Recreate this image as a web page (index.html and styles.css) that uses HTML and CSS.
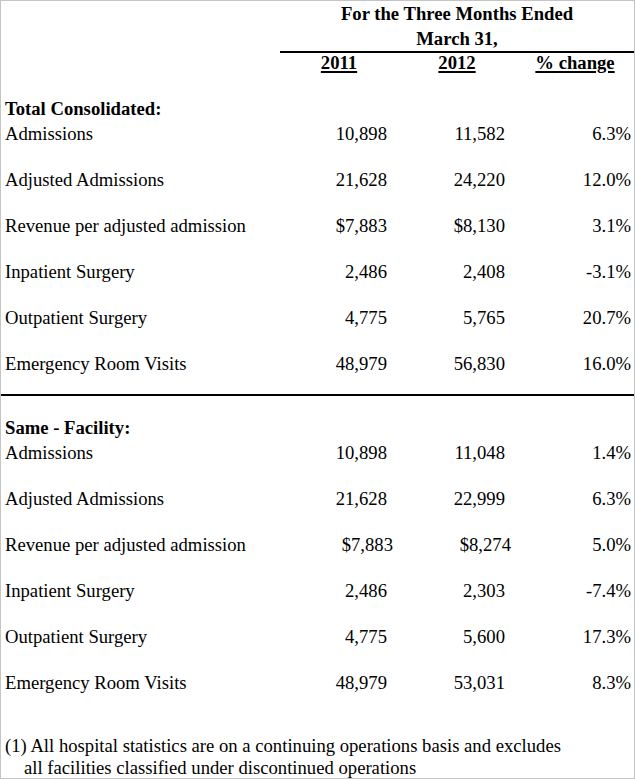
FILE: index.html
```html
<!DOCTYPE html>
<html>
<head>
<meta charset="utf-8">
<link rel="stylesheet" href="styles.css">
</head>
<body>
<div class="page">
<table class="stats">
  <colgroup>
    <col class="c-label"><col class="c-num"><col class="c-num"><col class="c-pct">
  </colgroup>
  <tr class="h1"><td></td><th colspan="3">For the Three Months Ended</th></tr>
  <tr class="h2"><td></td><th colspan="3" class="ruled">March 31,</th></tr>
  <tr class="h3"><td></td><th><u>2011</u></th><th><u>2012</u></th><th><u>% change</u></th></tr>
  <tr class="gap"><td colspan="4"></td></tr>
  <tr class="sect"><td colspan="4">Total Consolidated:</td></tr>
  <tr class="row"><td>Admissions</td><td class="n">10,898</td><td class="n">11,582</td><td class="p">6.3%</td></tr>
  <tr class="row"><td>Adjusted Admissions</td><td class="n">21,628</td><td class="n">24,220</td><td class="p">12.0%</td></tr>
  <tr class="row"><td>Revenue per adjusted admission</td><td class="n">$7,883</td><td class="n">$8,130</td><td class="p">3.1%</td></tr>
  <tr class="row"><td>Inpatient Surgery</td><td class="n">2,486</td><td class="n">2,408</td><td class="p">-3.1%</td></tr>
  <tr class="row"><td>Outpatient Surgery</td><td class="n">4,775</td><td class="n">5,765</td><td class="p">20.7%</td></tr>
  <tr class="row last"><td>Emergency Room Visits</td><td class="n">48,979</td><td class="n">56,830</td><td class="p">16.0%</td></tr>
  <tr class="gap2"><td colspan="4"></td></tr>
  <tr class="sect"><td colspan="4">Same - Facility:</td></tr>
  <tr class="row"><td>Admissions</td><td class="n">10,898</td><td class="n">11,048</td><td class="p">1.4%</td></tr>
  <tr class="row"><td>Adjusted Admissions</td><td class="n">21,628</td><td class="n">22,999</td><td class="p">6.3%</td></tr>
  <tr class="row"><td>Revenue per adjusted admission</td><td class="n shift">$7,883</td><td class="n shift">$8,274</td><td class="p">5.0%</td></tr>
  <tr class="row"><td>Inpatient Surgery</td><td class="n">2,486</td><td class="n">2,303</td><td class="p">-7.4%</td></tr>
  <tr class="row"><td>Outpatient Surgery</td><td class="n">4,775</td><td class="n">5,600</td><td class="p">17.3%</td></tr>
  <tr class="row"><td>Emergency Room Visits</td><td class="n">48,979</td><td class="n">53,031</td><td class="p">8.3%</td></tr>
</table>
<div class="note">
  <p>(1) All hospital statistics are on a continuing operations basis and excludes</p>
  <p class="indent">all facilities classified under discontinued operations</p>
</div>
</div>
</body>
</html>
```
FILE: styles.css
```css
html, body {
  margin: 0;
  padding: 0;
  background: #fff;
}
.page {
  box-sizing: border-box;
  width: 635px;
  height: 779px;
  border: 1px solid #c4c4c4;
  font-family: "Liberation Serif", "Times New Roman", serif;
  font-size: 18.67px;
  color: #000;
  overflow: hidden;
}
.stats {
  width: 633px;
  border-collapse: collapse;
  table-layout: fixed;
}
.c-label { width: 279px; }
.c-num { width: 118px; }
.c-pct { width: 118px; }
.stats td, .stats th {
  padding: 0;
  line-height: 23px;
  vertical-align: top;
  white-space: nowrap;
}
.stats th {
  font-weight: bold;
  text-align: center;
}
.h1 th, .h1 td { height: 25px; padding-top: 1px; }
.h2 th, .h2 td { height: 24px; }
.h2 .ruled { border-bottom: 2px solid #000; }
.h3 th, .h3 td { height: 24px; line-height: 19px; }
.h3 u { text-decoration-thickness: 2px; text-underline-offset: 2px; }
.gap td { height: 20px; }
.sect td {
  font-weight: bold;
  padding-left: 4px;
  height: 25px;
}
.row td { height: 46px; }
.row td:first-child { padding-left: 4px; }
.row.last td { height: 42px; border-bottom: 2px solid #000; }
.gap2 td { height: 20px; }
.n { text-align: right; padding-right: 11px !important; }
.n.shift { padding-right: 5px !important; }
.p { text-align: right; padding-right: 3px !important; }
.note {
  padding: 18px 0 0 4px;
}
.note p {
  margin: 0;
  line-height: 22px;
}
.note .indent { padding-left: 19px; }
```
